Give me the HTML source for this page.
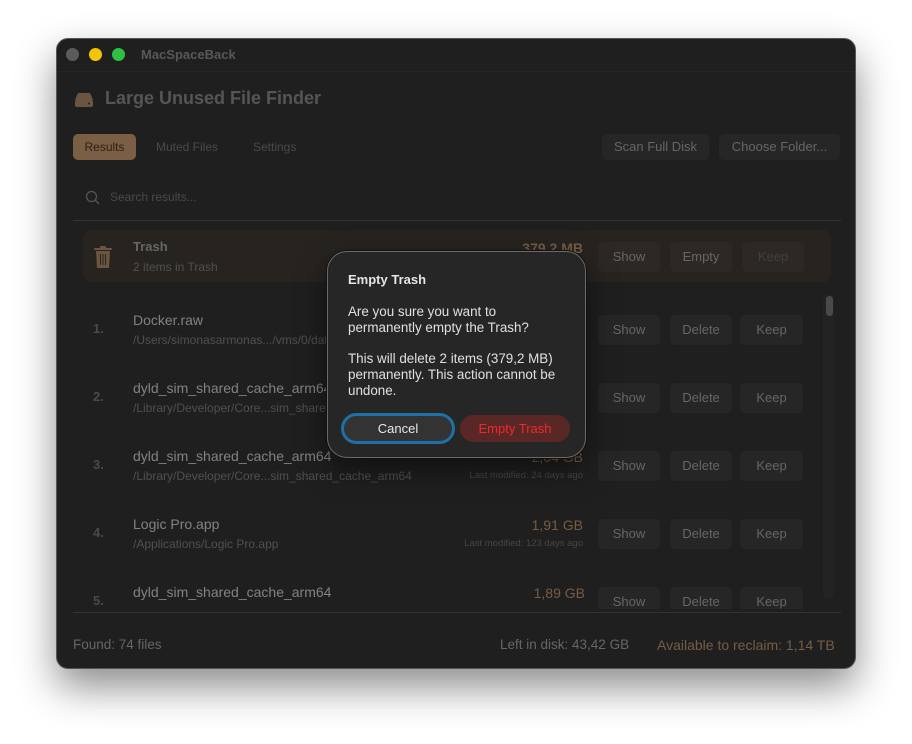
<!DOCTYPE html>
<html><head><style>
*{margin:0;padding:0;box-sizing:border-box}
body{width:912px;height:744px;background:#fff;font-family:"Liberation Sans",sans-serif;position:relative;overflow:hidden}
.win{position:absolute;left:56px;top:38px;width:800px;height:631px;background:#1f1f1f;border-radius:12px;border:1px solid #555;box-shadow:0 18px 40px rgba(0,0,0,.45);overflow:hidden}
.a{position:absolute;white-space:nowrap}
.dot{position:absolute;top:9px;width:13px;height:13px;border-radius:50%}
.btn{position:absolute;height:30px;background:#262626;border-radius:5px;color:#666;font-size:13px;text-align:center;line-height:30px}
.num{position:absolute;left:36px;color:#4a4a4a;font-size:13px;font-weight:bold}
.nm{position:absolute;left:76px;color:#828282;font-size:14px}
.pt{position:absolute;left:76px;color:#505050;font-size:12px}
.sz{position:absolute;right:272px;color:#765c44;font-size:14px;text-align:right}
.lm{position:absolute;right:272px;color:#464646;font-size:9.5px}
</style></head><body>
<div class="win">
 <div class="dot" style="left:9px;background:#5b5b5b"></div>
 <div class="dot" style="left:32px;background:#f5c400"></div>
 <div class="dot" style="left:55px;background:#2fc042"></div>
 <div class="a" style="left:84px;top:8px;font-size:13px;font-weight:bold;color:#585858">MacSpaceBack</div>
 <div style="position:absolute;left:0;top:32px;width:800px;height:1px;background:#262626"></div>
 <svg class="a" style="left:17px;top:52px" width="20" height="18"><path d="M4 2h12l3 7H1z" fill="#6b5440"/><rect x="1" y="9" width="18" height="7" rx="2" fill="#6b5440"/><circle cx="15" cy="12.5" r="1" fill="#222"/></svg>
 <div class="a" style="left:48px;top:49px;font-size:18px;font-weight:bold;color:#555">Large Unused File Finder</div>
 <div class="a" style="left:16px;top:95px;width:63px;height:26px;background:#7a5f45;border-radius:5px;color:#2a2018;font-size:12px;text-align:center;line-height:26px">Results</div>
 <div class="a" style="left:99px;top:101px;font-size:12px;color:#4a4a4a">Muted Files</div>
 <div class="a" style="left:196px;top:101px;font-size:12px;color:#4a4a4a">Settings</div>
 <div class="btn" style="left:545px;top:95px;width:107px;height:26px;line-height:26px">Scan Full Disk</div>
 <div class="btn" style="left:662px;top:95px;width:121px;height:26px;line-height:26px">Choose Folder...</div>
 <svg class="a" style="left:28px;top:151px" width="16" height="16"><circle cx="6.5" cy="6.5" r="5" stroke="#555" stroke-width="1.3" fill="none"/><path d="M10 10l4 4" stroke="#555" stroke-width="1.3"/></svg>
 <div class="a" style="left:53px;top:151px;font-size:12px;color:#4a4a4a">Search results...</div>
 <div style="position:absolute;left:16px;top:181px;width:768px;height:1px;background:#333"></div>
 <div class="a" style="left:26px;top:191px;width:748px;height:52px;background:#272420;border-radius:8px"></div>
 <svg class="a" style="left:36px;top:206px" width="20" height="24"><rect x="1" y="3" width="18" height="2" rx="1" fill="#6b5440"/><rect x="7" y="1" width="6" height="3" rx="1" fill="#6b5440"/><path d="M3 6h14l-1 17H4z" fill="#6b5440"/><path d="M7.5 9v11M10 9v11M12.5 9v11" stroke="#272420" stroke-width="1"/></svg>
 <div class="nm" style="top:200px;font-weight:bold;font-size:13px;color:#666">Trash</div>
 <div class="pt" style="top:221px">2 items in Trash</div>
 <div class="sz" style="top:201px;font-weight:bold">379,2 MB</div>
 <div class="btn" style="left:541px;top:203px;width:62px;background:#2c2925">Show</div>
 <div class="btn" style="left:613px;top:203px;width:62px;background:#2c2925">Empty</div>
 <div class="btn" style="left:685px;top:203px;width:62px;background:#2c2925;color:#404040">Keep</div>

 <div class="num" style="top:282px">1.</div><div class="nm" style="top:273px">Docker.raw</div><div class="pt" style="top:294px">/Users/simonasarmonas.../vms/0/data</div>
 <div class="btn" style="left:541px;top:276px;width:62px">Show</div><div class="btn" style="left:613px;top:276px;width:62px">Delete</div><div class="btn" style="left:683px;top:276px;width:63px">Keep</div>
 <div class="num" style="top:350px">2.</div><div class="nm" style="top:341px">dyld_sim_shared_cache_arm64</div><div class="pt" style="top:362px">/Library/Developer/Core...sim_shared_cache_arm64</div>
 <div class="btn" style="left:541px;top:344px;width:62px">Show</div><div class="btn" style="left:613px;top:344px;width:62px">Delete</div><div class="btn" style="left:683px;top:344px;width:63px">Keep</div>
 <div class="num" style="top:418px">3.</div><div class="nm" style="top:409px">dyld_sim_shared_cache_arm64</div><div class="pt" style="top:430px">/Library/Developer/Core...sim_shared_cache_arm64</div>
 <div class="sz" style="top:410px">2,04 GB</div><div class="lm" style="top:431px">Last modified: 24 days ago</div>
 <div class="btn" style="left:541px;top:412px;width:62px">Show</div><div class="btn" style="left:613px;top:412px;width:62px">Delete</div><div class="btn" style="left:683px;top:412px;width:63px">Keep</div>
 <div class="num" style="top:486px">4.</div><div class="nm" style="top:477px">Logic Pro.app</div><div class="pt" style="top:498px">/Applications/Logic Pro.app</div>
 <div class="sz" style="top:478px">1,91 GB</div><div class="lm" style="top:499px">Last modified: 123 days ago</div>
 <div class="btn" style="left:541px;top:480px;width:62px">Show</div><div class="btn" style="left:613px;top:480px;width:62px">Delete</div><div class="btn" style="left:683px;top:480px;width:63px">Keep</div>
 <div style="position:absolute;left:0;top:540px;width:800px;height:30px;overflow:hidden">
  <div class="num" style="top:14px">5.</div><div class="nm" style="top:5px">dyld_sim_shared_cache_arm64</div><div class="sz" style="top:6px">1,89 GB</div>
  <div class="btn" style="left:541px;top:8px;width:62px">Show</div><div class="btn" style="left:613px;top:8px;width:62px">Delete</div><div class="btn" style="left:683px;top:8px;width:63px">Keep</div>
 </div>
 <div class="a" style="left:766px;top:255px;width:11px;height:305px;background:#232323;border-radius:5px"></div>
 <div class="a" style="left:769px;top:257px;width:7px;height:20px;background:#4a4a4a;border-radius:4px"></div>
 <div style="position:absolute;left:16px;top:573px;width:768px;height:1px;background:#333"></div>
 <div class="a" style="left:16px;top:598px;font-size:13.5px;color:#666">Found: 74 files</div>
 <div class="a" style="left:443px;top:598px;font-size:13.5px;color:#666">Left in disk: 43,42 GB</div>
 <div class="a" style="left:600px;top:598px;font-size:14px;color:#765c44">Available to reclaim: 1,14 TB</div>
</div>
<div class="a" style="left:327px;top:251px;width:259px;height:207px;background:#262626;border-radius:20px;border:1px solid #6a6a6a;box-shadow:0 0 0 1px #111,0 10px 30px rgba(0,0,0,.5)">
 <div class="a" style="left:20px;top:20px;font-size:13px;font-weight:bold;color:#e6e6e6">Empty Trash</div>
 <div class="a" style="left:20px;top:52px;font-size:13.4px;color:#e0e0e0;line-height:16px">Are you sure you want to<br>permanently empty the Trash?</div>
 <div class="a" style="left:20px;top:99px;font-size:13.4px;color:#e0e0e0;line-height:16px">This will delete 2 items (379,2 MB)<br>permanently. This action cannot be<br>undone.</div>
 <div class="a" style="left:13px;top:161px;width:114px;height:31px;border:3px solid #1f6fa8;border-radius:16px;background:#333;color:#e8e8e8;font-size:13px;text-align:center;line-height:25px">Cancel</div>
 <div class="a" style="left:132px;top:163px;width:110px;height:27px;border-radius:14px;background:#5a2727;color:#ec2a2a;font-size:13px;text-align:center;line-height:27px">Empty Trash</div>
</div>
</body></html>
